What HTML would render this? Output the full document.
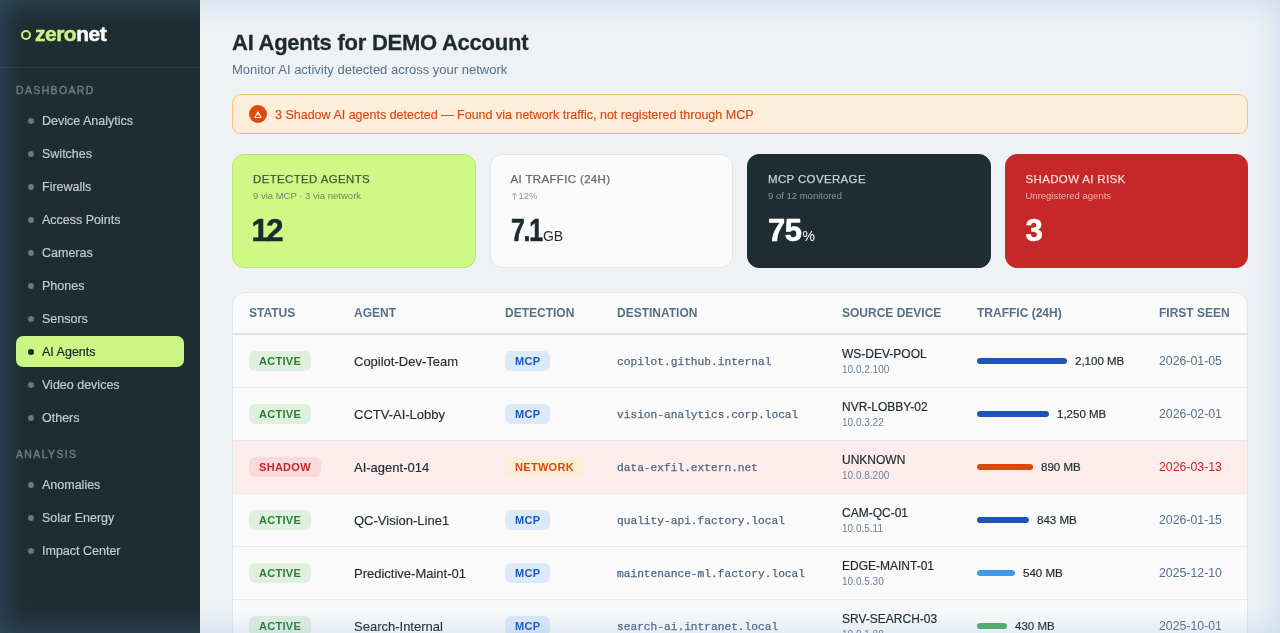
<!DOCTYPE html>
<html><head><meta charset="utf-8">
<style>
*{box-sizing:border-box;margin:0;padding:0}
html,body{width:1280px;height:633px;overflow:hidden;font-family:"Liberation Sans",sans-serif;background:#eef2f5}
#side{position:absolute;left:0;top:0;width:200px;height:633px;background:#1d2d31}
.logo{position:absolute;left:21px;top:24px;height:20px;display:flex;align-items:center}
.logo .ring{width:10px;height:10px;border:2px solid #c8f57f;border-radius:50%;margin-right:4px;margin-top:1px}
.logo .t{font-size:21px;font-weight:700;letter-spacing:-0.5px;-webkit-text-stroke:0.5px currentColor;color:#fff}
.logo .t b{color:#c8f57f;font-weight:700}
.sdiv{position:absolute;left:0;top:67px;width:200px;height:1px;background:#2d3a3f}
.sec{position:absolute;left:16px;font-size:10.5px;font-weight:400;-webkit-text-stroke:0.45px currentColor;letter-spacing:1.35px;color:#6d7b7e}
.nav{position:absolute;left:16px;width:168px;height:31px;border-radius:7px;display:flex;align-items:center;font-size:12.5px;color:#c3cbcd;-webkit-text-stroke:0.2px currentColor}
.nav i{display:block;width:6px;height:6px;border-radius:50%;background:#6b797c;margin-left:12px;margin-right:8px}
.nav.act{background:#ccf784;color:#1b2629;-webkit-text-stroke:0.2px #1b2629}
.nav.act i{background:#1b2629}
#main{position:absolute;left:200px;top:0;width:1080px;height:633px}
h1{position:absolute;left:232px;top:30px;font-size:22px;font-weight:700;-webkit-text-stroke:0.3px currentColor;color:#1d2a2e;letter-spacing:-0.25px;white-space:nowrap}
.sub{position:absolute;left:232px;top:62px;font-size:13px;color:#577189;white-space:nowrap}
.alert{position:absolute;left:232px;top:94px;width:1016px;height:40px;border:1px solid #f8c070;background:#fdeedb;border-radius:9px;display:flex;align-items:center}
.alert .ic{width:18px;height:18px;border-radius:50%;background:#e04b0b;margin-left:16px;margin-right:8px;position:relative}
.alert .ic svg{position:absolute;left:5px;top:5px}
.alert span{position:relative;top:1px;font-size:12.5px;color:#d9480f;white-space:nowrap;-webkit-text-stroke:0.15px currentColor}
.card{position:absolute;top:154px;width:243.5px;height:113.5px;border-radius:12px;border:1px solid transparent}
.card .lab{position:absolute;left:20px;top:18px;-webkit-text-stroke:0.25px currentColor;font-size:11.5px;letter-spacing:0.35px;white-space:nowrap}
.card .sm{position:absolute;left:20px;top:35px;font-size:9.5px;white-space:nowrap}
.card .val{position:absolute;left:20px;top:58px;font-size:31px;font-weight:700;-webkit-text-stroke:0.6px currentColor;letter-spacing:-1.2px;white-space:nowrap}
.card .val small{-webkit-text-stroke:0;font-size:14px;font-weight:400;letter-spacing:-0.3px;margin-left:1px}
.c1{left:232px;background:#cef986;border-color:#b9e46f}
.c1 .lab{color:#45593f}.c1 .sm{color:#6f8a62}.c1 .val{color:#1d2a2e}
.c2{left:489.5px;background:#fafafa;border-color:#e1e5e8}
.c2 .lab{color:#5d6b70}.c2 .sm{color:#8f999c}.c2 .val{color:#1d2a2e}
.c3{left:747px;background:#1d2d31;border-color:#1d2d31}
.c3 .lab{color:#c9d0d2}.c3 .sm{color:#8b9699}.c3 .val{color:#fff}
.c4{left:1004.5px;background:#c62828;border-color:#c62828}
.c4 .lab{color:#f6d7d7}.c4 .sm{color:#eeb3b3}.c4 .val{color:#fff}
#tbl{position:absolute;left:232px;top:292px;width:1016px;height:400px;background:#fafafa;border:1px solid #e1e5e8;border-radius:13px;overflow:hidden}
table{border-collapse:collapse;table-layout:fixed;width:1014px}
th{height:41px;text-align:left;padding-left:16px;font-size:12px;font-weight:700;color:#567088;border-bottom:2px solid #dde3e8;white-space:nowrap}
td{height:53px;padding-left:16px;border-bottom:1px solid #e7eaed;white-space:nowrap;vertical-align:middle}
tr.sh td{background:#fcecec}
.b{display:inline-block;height:20px;line-height:20px;padding:0 10px;border-radius:6px;font-size:11px;font-weight:700;letter-spacing:0.3px}
.ba{background:#e0f0df;color:#2e7d32}
.bs{background:#fad8de;color:#c62828}
.bm{background:#dce9f8;color:#1b57b8}
.bn{background:#fdecd6;color:#d9480f}
.ag{padding-top:2px;font-size:13px;color:#1d2a2e;-webkit-text-stroke:0.15px currentColor}
.ds{padding-top:2px;font-family:"Liberation Mono",monospace;font-size:11.2px;color:#4e6680;-webkit-text-stroke:0.25px currentColor}
.dv{font-size:12px;color:#1d2a2e;line-height:14px;-webkit-text-stroke:0.2px currentColor}
.ip{font-size:10px;color:#6a8299;line-height:13px;position:relative;top:2px}
.tr{display:flex;align-items:center}
.bar{height:6px;border-radius:3px;margin-right:8px}
.mb{font-size:11.5px;color:#1d2a2e;-webkit-text-stroke:0.2px currentColor}
.fs{font-size:12.3px;color:#587089}
.fs.red{color:#c62828}
#vig{position:absolute;left:0;top:0;width:1280px;height:633px;pointer-events:none;box-shadow:inset 0 0 32px rgba(105,160,225,0.3)}
#root{position:absolute;left:0;top:0;width:1280px;height:633px;will-change:transform}
</style></head><body><div id="root">
<div id="side">
  <div class="logo"><div class="ring"></div><div class="t"><b>zero</b>net</div></div>
  <div class="sdiv"></div>
  <div class="sec" style="top:84px">DASHBOARD</div>
  <div class="nav" style="top:105px"><i></i>Device Analytics</div>
  <div class="nav" style="top:138px"><i></i>Switches</div>
  <div class="nav" style="top:171px"><i></i>Firewalls</div>
  <div class="nav" style="top:204px"><i></i>Access Points</div>
  <div class="nav" style="top:237px"><i></i>Cameras</div>
  <div class="nav" style="top:270px"><i></i>Phones</div>
  <div class="nav" style="top:303px"><i></i>Sensors</div>
  <div class="nav act" style="top:336px"><i></i>AI Agents</div>
  <div class="nav" style="top:369px"><i></i>Video devices</div>
  <div class="nav" style="top:402px"><i></i>Others</div>
  <div class="sec" style="top:448px">ANALYSIS</div>
  <div class="nav" style="top:469px"><i></i>Anomalies</div>
  <div class="nav" style="top:502px"><i></i>Solar Energy</div>
  <div class="nav" style="top:535px"><i></i>Impact Center</div>
</div>
<h1>AI Agents for DEMO Account</h1>
<div class="sub">Monitor AI activity detected across your network</div>
<div class="alert"><div class="ic"><svg width="8" height="8" viewBox="0 0 8 8"><path d="M4 2 L7.1 7.4 H0.9 Z" fill="none" stroke="#fff" stroke-width="1.05" stroke-linejoin="round"/><path d="M4 4.1 V5.6" stroke="#fff" stroke-width="0.9"/></svg></div><span>3 Shadow AI agents detected — Found via network traffic, not registered through MCP</span></div>

<div class="card c1"><div class="lab">DETECTED AGENTS</div><div class="sm">9 via MCP · 3 via network</div><div class="val" style="letter-spacing:-2.5px;left:18.5px">12</div></div>
<div class="card c2"><div class="lab">AI TRAFFIC (24H)</div><div class="sm"><svg width="7" height="8" viewBox="0 0 7 8" style="vertical-align:-0.5px;margin-right:1px"><path d="M3.5 7.6 V1.2 M1 3.6 L3.5 1.1 L6 3.6" fill="none" stroke="#9aa3a6" stroke-width="1"/></svg>12%</div><div class="val"><span style="display:inline-block;letter-spacing:-1.5px;transform:scaleX(0.8);transform-origin:0 50%;margin-right:-9px">7.1</span><small style="margin-left:3px">GB</small></div></div>
<div class="card c3"><div class="lab">MCP COVERAGE</div><div class="sm">9 of 12 monitored</div><div class="val" style="letter-spacing:-0.5px">75<small>%</small></div></div>
<div class="card c4"><div class="lab">SHADOW AI RISK</div><div class="sm">Unregistered agents</div><div class="val">3</div></div>

<div id="tbl"><table>
<colgroup><col style="width:105px"><col style="width:151px"><col style="width:112px"><col style="width:225px"><col style="width:135px"><col style="width:182px"><col style="width:104px"></colgroup>
<tr><th>STATUS</th><th>AGENT</th><th>DETECTION</th><th>DESTINATION</th><th>SOURCE DEVICE</th><th>TRAFFIC (24H)</th><th>FIRST SEEN</th></tr>
<tr><td><span class="b ba">ACTIVE</span></td><td class="ag">Copilot-Dev-Team</td><td><span class="b bm">MCP</span></td><td class="ds">copilot.github.internal</td><td><div class="dv">WS-DEV-POOL</div><div class="ip">10.0.2.100</div></td><td><div class="tr"><div class="bar" style="width:90px;background:#1a55b7"></div><span class="mb">2,100 MB</span></div></td><td class="fs">2026-01-05</td></tr>
<tr><td><span class="b ba">ACTIVE</span></td><td class="ag">CCTV-AI-Lobby</td><td><span class="b bm">MCP</span></td><td class="ds">vision-analytics.corp.local</td><td><div class="dv">NVR-LOBBY-02</div><div class="ip">10.0.3.22</div></td><td><div class="tr"><div class="bar" style="width:72px;background:#1a55b7"></div><span class="mb">1,250 MB</span></div></td><td class="fs">2026-02-01</td></tr>
<tr class="sh"><td><span class="b bs">SHADOW</span></td><td class="ag">AI-agent-014</td><td><span class="b bn">NETWORK</span></td><td class="ds">data-exfil.extern.net</td><td><div class="dv">UNKNOWN</div><div class="ip">10.0.8.200</div></td><td><div class="tr"><div class="bar" style="width:56px;background:#d9480f"></div><span class="mb">890 MB</span></div></td><td class="fs red">2026-03-13</td></tr>
<tr><td><span class="b ba">ACTIVE</span></td><td class="ag">QC-Vision-Line1</td><td><span class="b bm">MCP</span></td><td class="ds">quality-api.factory.local</td><td><div class="dv">CAM-QC-01</div><div class="ip">10.0.5.11</div></td><td><div class="tr"><div class="bar" style="width:52px;background:#1a55b7"></div><span class="mb">843 MB</span></div></td><td class="fs">2026-01-15</td></tr>
<tr><td><span class="b ba">ACTIVE</span></td><td class="ag">Predictive-Maint-01</td><td><span class="b bm">MCP</span></td><td class="ds">maintenance-ml.factory.local</td><td><div class="dv">EDGE-MAINT-01</div><div class="ip">10.0.5.30</div></td><td><div class="tr"><div class="bar" style="width:38px;background:#3d9be9"></div><span class="mb">540 MB</span></div></td><td class="fs">2025-12-10</td></tr>
<tr><td><span class="b ba">ACTIVE</span></td><td class="ag">Search-Internal</td><td><span class="b bm">MCP</span></td><td class="ds">search-ai.intranet.local</td><td><div class="dv">SRV-SEARCH-03</div><div class="ip">10.0.1.88</div></td><td><div class="tr"><div class="bar" style="width:30px;background:#4caf64"></div><span class="mb">430 MB</span></div></td><td class="fs">2025-10-01</td></tr>
</table></div>
<div id="vig"></div>
</div></body></html>
